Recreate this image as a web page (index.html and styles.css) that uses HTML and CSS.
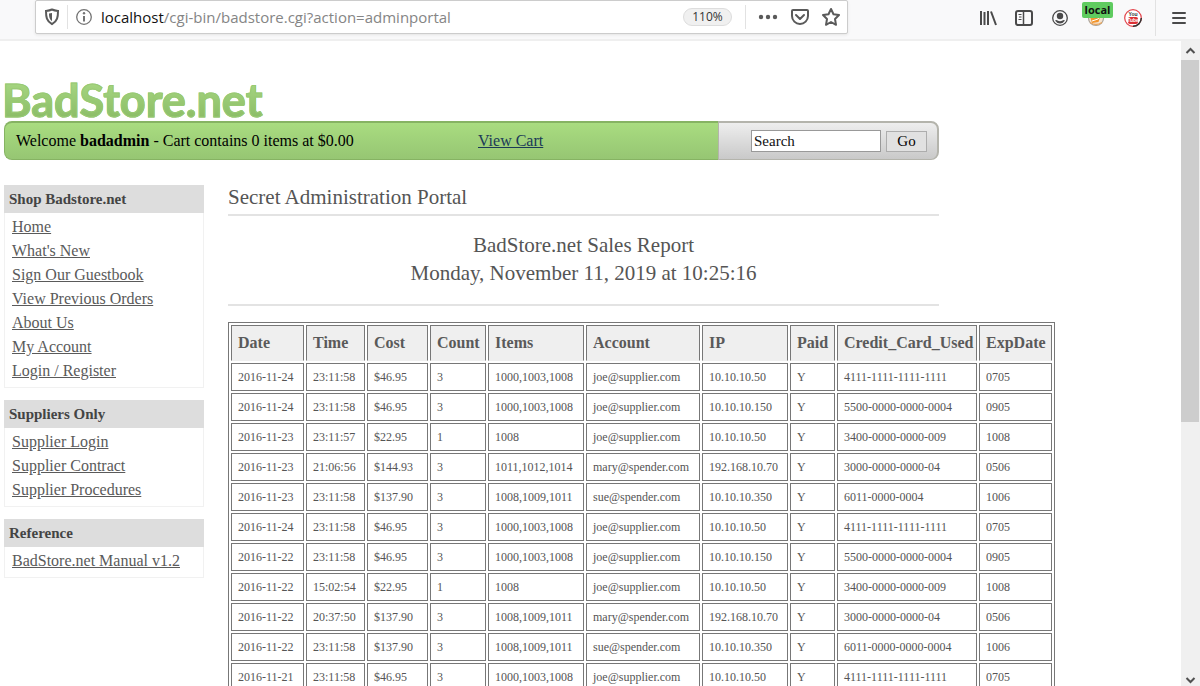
FILE: index.html
```
<!doctype html>
<html lang="en">

<head>
<meta charset="utf-8">
<title>BadStore.net - Secret Administration Portal</title>

<link rel="stylesheet" href="styles.css">
</head>

<body>

<header class="toolbar">
  <div class="urlbar">
    <svg class="shield" width="16" height="18" viewBox="0 0 16 18">
      <path d="M8 1.500c2 1 4 1.300 6 1.500 0 6-.5 10-6 13.200C2.500 13 2 9 2 3c2-.2 4-.5 6-1.500z" fill="none" stroke="#5a5a5a" stroke-width="2"/>
      <path d="M8 5v8.200C5.500 11.500 5 9 5 5.500z" fill="#5a5a5a"/>
    </svg>
    <span class="divider"></span>
    <svg class="info" width="18" height="18" viewBox="0 0 18 18">
      <circle cx="9" cy="9" r="7.300" fill="none" stroke="#737373" stroke-width="1.300"/>
      <circle cx="9" cy="5.300" r="1.200" fill="#737373"/>
      <path d="M9 8v5.500" stroke="#737373" stroke-width="2"/>
    </svg>
    <div class="url"><b>localhost</b>/cgi-bin/badstore.cgi?action=adminportal</div>
    <button class="zoom">110%</button>
    <span class="divider"></span>
    <svg class="dots" width="20" height="18" viewBox="0 0 20 18" fill="#5a5a5a">
      <circle cx="3" cy="9" r="2.200"/><circle cx="10" cy="9" r="2.200"/><circle cx="17" cy="9" r="2.200"/>
    </svg>
    <svg class="pocket" width="20" height="18" viewBox="0 0 20 18" fill="none" stroke="#5a5a5a" stroke-width="2" stroke-linecap="round" stroke-linejoin="round">
      <path d="M3 2h14q1 0 1 1v5a8 8 0 0 1-16 0V3q0-1 1-1z"/>
      <path d="M6 7l4 4 4-4"/>
    </svg>
    <svg class="star" width="20" height="20" viewBox="0 0 20 20" fill="none" stroke="#5a5a5a" stroke-width="2" stroke-linejoin="round">
      <path d="M10 2l2.500 5.200 5.500.8-4 4 1 5.800-5-2.800-5 2.800 1-5.800-4-4 5.500-.8z"/>
    </svg>
  </div>

  <div class="tools">
    <svg width="18" height="18" viewBox="0 0 18 18" fill="none" stroke="#4a4a4a" stroke-width="2">
      <path d="M2 2v14M5.500 3v13M9 2v14M12 2.500l5 13.500"/>
    </svg>
    <svg width="18" height="18" viewBox="0 0 18 18" fill="none" stroke="#4a4a4a">
      <rect x="1" y="2" width="16" height="14" rx="2" stroke-width="2"/>
      <path d="M8.500 2v14" stroke-width="1.500"/>
      <path d="M3.500 5.500h3M4 8h2.500M3.500 10.500h3" stroke-width="1"/>
    </svg>
    <svg width="18" height="18" viewBox="0 0 18 18">
      <circle cx="9" cy="9" r="7.300" fill="none" stroke="#4a4a4a" stroke-width="1.300"/>
      <circle cx="9" cy="7" r="3.200" fill="#4a4a4a"/>
      <path d="M4 11.500q1.500-.8 2.500 0 2.500 1.300 5 0 1-.8 2.500 0Q12 14.500 9 14.500T4 11.500z" fill="#4a4a4a"/>
    </svg>
    <div class="proxy">
      <svg width="18" height="18" viewBox="0 0 18 18">
        <circle cx="9" cy="9" r="7.500" fill="#f5e3cf" stroke="#a9a39b" stroke-width="1.200"/>
        <path d="M2.500 6l11 .5-2 6.500-6.500 1z" fill="#f3952c"/>
        <path d="M5 12l6-2 3-4" fill="none" stroke="#fff" stroke-width="1"/>
        <path d="M3 13.500q6 4 12 0" fill="none" stroke="#e9a55c" stroke-width="1.500"/>
      </svg>
      <span class="proxy-badge">local</span>
    </div>
    <svg width="20" height="20" viewBox="0 0 20 20">
      <circle cx="10" cy="10" r="8.300" fill="#fff" stroke="#e2434a" stroke-width="1.200"/>
      <path d="M18.300 10a8.300 8.300 0 0 1-8.300 8.300" fill="none" stroke="#333" stroke-width="1.500"/>
      <rect x="5" y="9" width="10" height="7" rx="2" fill="#dc2f34"/>
      <text class="yt" x="10" y="8" text-anchor="middle" fill="#333">You</text>
      <text class="yt" x="10" y="14" text-anchor="middle" fill="#fff">Tube</text>
    </svg>
    <span class="divider tall"></span>
    <svg width="16" height="18" viewBox="0 0 16 18" stroke="#4a4a4a" stroke-width="2" stroke-linecap="round">
      <path d="M2 4h12M2 9h12M2 14h12"/>
    </svg>
  </div>
</header>

<div class="viewport">
  <div class="page">
    <div class="logo">BadStore.net</div>

    <div class="topbar">
      <div class="cart">
        <span class="welcome">Welcome <b>badadmin</b> - Cart contains 0 items at $0.00</span>
        <a href="#">View Cart</a>
      </div>
      <form class="search">
        <input type="text" name="searchquery" value="Search" aria-label="Search">
        <button type="button">Go</button>
      </form>
    </div>

    <div class="columns">
      <nav class="sidebar">
        <div class="menu">
          <h2>Shop Badstore.net</h2>
          <ul>
            <li><a href="#">Home</a></li>
            <li><a href="#">What's New</a></li>
            <li><a href="#">Sign Our Guestbook</a></li>
            <li><a href="#">View Previous Orders</a></li>
            <li><a href="#">About Us</a></li>
            <li><a href="#">My Account</a></li>
            <li><a href="#">Login / Register</a></li>
          </ul>
        </div>
        <div class="menu">
          <h2>Suppliers Only</h2>
          <ul>
            <li><a href="#">Supplier Login</a></li>
            <li><a href="#">Supplier Contract</a></li>
            <li><a href="#">Supplier Procedures</a></li>
          </ul>
        </div>
        <div class="menu">
          <h2>Reference</h2>
          <ul>
            <li><a href="#">BadStore.net Manual v1.2</a></li>
          </ul>
        </div>
      </nav>

      <main class="content">
        <h1>Secret Administration Portal</h1>
        <div class="report-title">
          BadStore.net Sales Report<br>
          Monday, November 11, 2019 at 10:25:16
        </div>

        <table class="sales">
          <colgroup>
            <col class="c-date"><col class="c-time"><col class="c-cost"><col class="c-count"><col class="c-items">
            <col class="c-account"><col class="c-ip"><col class="c-paid"><col class="c-card"><col class="c-exp">
          </colgroup>
          <tr><th>Date</th><th>Time</th><th>Cost</th><th>Count</th><th>Items</th><th>Account</th><th>IP</th><th>Paid</th><th>Credit_Card_Used</th><th>ExpDate</th></tr>
          <tr><td>2016-11-24</td><td>23:11:58</td><td>$46.95</td><td>3</td><td>1000,1003,1008</td><td>joe@supplier.com</td><td>10.10.10.50</td><td>Y</td><td>4111-1111-1111-1111</td><td>0705</td></tr>
          <tr><td>2016-11-24</td><td>23:11:58</td><td>$46.95</td><td>3</td><td>1000,1003,1008</td><td>joe@supplier.com</td><td>10.10.10.150</td><td>Y</td><td>5500-0000-0000-0004</td><td>0905</td></tr>
          <tr><td>2016-11-23</td><td>23:11:57</td><td>$22.95</td><td>1</td><td>1008</td><td>joe@supplier.com</td><td>10.10.10.50</td><td>Y</td><td>3400-0000-0000-009</td><td>1008</td></tr>
          <tr><td>2016-11-23</td><td>21:06:56</td><td>$144.93</td><td>3</td><td>1011,1012,1014</td><td>mary@spender.com</td><td>192.168.10.70</td><td>Y</td><td>3000-0000-0000-04</td><td>0506</td></tr>
          <tr><td>2016-11-23</td><td>23:11:58</td><td>$137.90</td><td>3</td><td>1008,1009,1011</td><td>sue@spender.com</td><td>10.10.10.350</td><td>Y</td><td>6011-0000-0004</td><td>1006</td></tr>
          <tr><td>2016-11-24</td><td>23:11:58</td><td>$46.95</td><td>3</td><td>1000,1003,1008</td><td>joe@supplier.com</td><td>10.10.10.50</td><td>Y</td><td>4111-1111-1111-1111</td><td>0705</td></tr>
          <tr><td>2016-11-22</td><td>23:11:58</td><td>$46.95</td><td>3</td><td>1000,1003,1008</td><td>joe@supplier.com</td><td>10.10.10.150</td><td>Y</td><td>5500-0000-0000-0004</td><td>0905</td></tr>
          <tr><td>2016-11-22</td><td>15:02:54</td><td>$22.95</td><td>1</td><td>1008</td><td>joe@supplier.com</td><td>10.10.10.50</td><td>Y</td><td>3400-0000-0000-009</td><td>1008</td></tr>
          <tr><td>2016-11-22</td><td>20:37:50</td><td>$137.90</td><td>3</td><td>1008,1009,1011</td><td>mary@spender.com</td><td>192.168.10.70</td><td>Y</td><td>3000-0000-0000-04</td><td>0506</td></tr>
          <tr><td>2016-11-22</td><td>23:11:58</td><td>$137.90</td><td>3</td><td>1008,1009,1011</td><td>sue@spender.com</td><td>10.10.10.350</td><td>Y</td><td>6011-0000-0000-0004</td><td>1006</td></tr>
          <tr><td>2016-11-21</td><td>23:11:58</td><td>$46.95</td><td>3</td><td>1000,1003,1008</td><td>joe@supplier.com</td><td>10.10.10.50</td><td>Y</td><td>4111-1111-1111-1111</td><td>0705</td></tr>
        </table>
      </main>
    </div>
  </div>

  <div class="scrollbar">
    <svg width="19" height="19" viewBox="0 0 19 19" fill="none" stroke="#505050" stroke-width="2">
      <path d="M5.500 12l4-4 4 4"/>
    </svg>
    <div class="track"><div class="thumb"></div></div>
    <svg width="19" height="12" viewBox="0 0 19 12" fill="none" stroke="#505050" stroke-width="2">
      <path d="M5.500 4l4 4 4-4"/>
    </svg>
  </div>
</div>

</body>
</html>
```
FILE: styles.css
```
* {
  box-sizing: border-box;
}

body {
  display: flex;
  flex-direction: column;
  height: 100vh;
  margin: 0;
  overflow: hidden;
  background: #fff;
  color: #555;
  font-family: "Liberation Serif", "Times New Roman", serif;
  font-size: 16px;
}

svg {
  display: block;
  flex: none;
}

/* browser toolbar */

.toolbar {
  display: flex;
  flex: none;
  justify-content: space-between;
  height: 41px;
  padding: 0 13px 0 35px;
  background: #f9f9fa;
  border-bottom: 2px solid #efefef;
  font-family: "Open Sans", sans-serif;
}

.urlbar {
  display: flex;
  align-items: center;
  width: 71%;
  max-width: 813px;
  height: 34px;
  padding: 0 6px 0 8px;
  background: #fff;
  border: 1px solid #ccc;
  border-radius: 2px;
  box-shadow: 0 1px 3px #e4e4e4;
}

.divider {
  flex: none;
  width: 1px;
  height: 24px;
  margin: 0 7px;
  background: #e2e2e2;
}

.divider.tall {
  height: 36px;
  margin: 0 -3px 0 -6px;
}

.url {
  flex: 1;
  margin-left: 8px;
  color: #858585;
  font-size: 15px;
  white-space: nowrap;
  overflow: hidden;
}

.url b {
  color: #111;
  font-weight: normal;
}

.zoom {
  width: 49px;
  height: 18px;
  padding: 0;
  margin-right: 6px;
  background: #f0f0f0;
  border: 1px solid #ddd;
  border-radius: 9px;
  color: #333;
  font: 12px/16px "Open Sans", sans-serif;
}

.dots {
  margin: 0 12px 0 5px;
}

.pocket {
  margin-right: 11px;
}

.tools {
  display: flex;
  align-items: center;
  gap: 18px;
  height: 35px;
}

.proxy {
  position: relative;
}

.proxy-badge {
  position: absolute;
  top: -7px;
  left: -5px;
  width: 31px;
  height: 16px;
  background: #5fcb5f;
  border-radius: 2px;
  color: #111;
  font: bold 11px/16px "Open Sans", sans-serif;
  text-align: center;
}

.yt {
  font: bold 5px "Liberation Sans", sans-serif;
}

/* page */

.viewport {
  display: flex;
  flex: 1;
  min-height: 0;
}

.page {
  flex: 1;
  padding: 36px 4px 0;
  overflow: hidden;
}

.logo {
  height: 44px;
  margin-left: -2px;
  background: linear-gradient(#a9d984, #8abb65);
  background-clip: text;
  -webkit-background-clip: text;
  -webkit-text-stroke: 1px #98c973;
  color: transparent;
  font: bold 45px/46px Lato, sans-serif;
}

.topbar {
  display: flex;
  max-width: 935px;
  height: 39px;
}

.cart {
  display: flex;
  flex: 1;
  align-items: center;
  padding-left: 11px;
  background: linear-gradient(#a9dc80, #96c673);
  border: solid #86b363;
  border-width: 2px 0 1px 1px;
  border-radius: 8px 0 0 8px;
  color: #000;
}

.welcome {
  width: 462px;
}

.cart a {
  color: #1b3a57;
}

.search {
  display: flex;
  align-items: center;
  gap: 5px;
  width: 221px;
  padding-left: 32px;
  background: linear-gradient(#eee, #c9c9c9);
  border: solid #b4b4ac;
  border-width: 2px 2px 1px 1px;
  border-radius: 0 8px 8px 0;
}

.search input {
  width: 130px;
  height: 22px;
  padding: 0 2px;
  border: 1px solid #999;
  color: #111;
  font: 15px "Liberation Serif", serif;
}

.search button {
  width: 41px;
  height: 21px;
  padding: 0;
  background: #e1e1e1;
  border: 1px solid #adadad;
  color: #000;
  font: 15px "Liberation Serif", serif;
}

.columns {
  display: flex;
  gap: 24px;
  max-width: 935px;
  padding-top: 25px;
}

.sidebar {
  flex: none;
  width: 200px;
}

.menu {
  margin-bottom: 12px;
}

.menu h2 {
  margin: 0;
  padding: 0 5px;
  background: #ddd;
  color: #444;
  font-size: 15px;
  line-height: 28px;
}

.menu ul {
  margin: 0;
  padding: 2px 7px 4px;
  border: 1px solid #f1f1f1;
  border-top: 0;
  list-style: none;
  line-height: 24px;
}

.menu a {
  color: #5a5a5a;
}

.content {
  flex: 1;
  min-width: 0;
}

h1 {
  margin: 0;
  border-bottom: 2px solid #e3e3e3;
  font-size: 21px;
  font-weight: normal;
  line-height: 24px;
  padding-bottom: 5px;
}

.report-title {
  padding: 15px 0 17px;
  margin-bottom: 16px;
  border-bottom: 2px solid #e3e3e3;
  font-size: 21px;
  line-height: 28px;
  text-align: center;
}

.sales {
  width: 827px;
  table-layout: fixed;
  border: 1px solid #777;
  border-spacing: 2px;
  text-align: left;
  white-space: nowrap;
}

.sales th,
.sales td {
  height: 28px;
  padding: 0 6px;
  border: 1px solid #777;
}

.sales th {
  height: 36px;
  background: #efefef;
  border-bottom-color: #efefef;
  color: #5a5a5a;
  font-size: 16px;
}

.sales td {
  font-size: 12px;
}

.c-date { width: 73px; }
.c-time { width: 59px; }
.c-cost { width: 61px; }
.c-count { width: 56px; }
.c-items { width: 96px; }
.c-account { width: 114px; }
.c-ip { width: 86px; }
.c-paid { width: 45px; }
.c-card { width: 140px; }
.c-exp { width: 73px; }

.scrollbar {
  display: flex;
  flex: none;
  flex-direction: column;
  width: 19px;
  background: #f0f0f0;
}

.track {
  flex: 1;
}

.thumb {
  width: 18px;
  height: 59%;
  background: #cdcdcd;
}
```
